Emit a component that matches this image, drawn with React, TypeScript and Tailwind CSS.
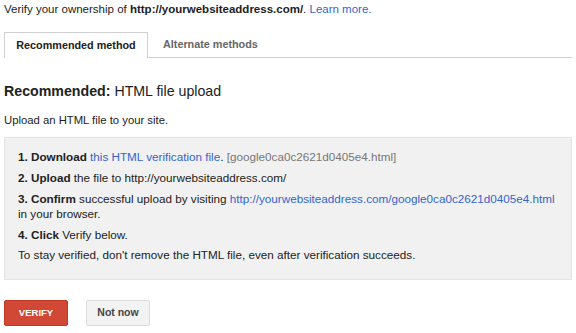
export default function App() {
  return (
    <div className="h-[333px] w-[576px] overflow-hidden bg-white font-['Liberation_Sans',Arial,sans-serif] text-[#222]">
      <p className="px-[4px] pt-[1px] text-[11.5px] leading-[16px]">
        Verify your ownership of <b>http://yourwebsiteaddress.com/</b>.{" "}
        <a className="text-[#3366cc]">Learn more.</a>
      </p>

      <div className="mx-[4px] mt-[15px] flex h-[26px] items-end border-b border-[#d0d0d0]">
        <div className="-mb-px flex h-[26px] w-[144px] items-center justify-center border border-b-0 border-[#d0d0d0] bg-white text-[10.8px] font-bold text-[#222]">
          Recommended method
        </div>
        <div className="flex h-[26px] items-center pl-[15px] text-[10.8px] font-bold text-[#666]">
          Alternate methods
        </div>
      </div>

      <h2 className="mt-[23px] px-[4px] text-[14.2px] leading-[20px]">
        <b>Recommended:</b> HTML file upload
      </h2>

      <p className="mt-[11px] px-[4px] text-[11.3px] leading-[16px]">Upload an HTML file to your site.</p>

      <div className="mx-[4px] mt-[9px] h-[143px] border border-[#e3e3e3] bg-[#f1f1f1] px-[13px] pt-[11px] text-[11.7px] leading-[15px]">
        <p>
          <b>1. Download</b> <a className="text-[#3366cc]">this HTML verification file</a>.{" "}
          <span className="text-[#777]">[google0ca0c2621d0405e4.html]</span>
        </p>
        <p className="mt-[6px]">
          <b>2. Upload</b> the file to http://yourwebsiteaddress.com/
        </p>
        <p className="mt-[6px]">
          <b>3. Confirm</b> successful upload by visiting{" "}
          <a className="text-[#3366cc]">http://yourwebsiteaddress.com/google0ca0c2621d0405e4.html</a>
          <br />
          in your browser.
        </p>
        <p className="mt-[6px]">
          <b>4. Click</b> Verify below.
        </p>
        <p className="mt-[5px]">To stay verified, don't remove the HTML file, even after verification succeeds.</p>
      </div>

      <div className="mt-[20px] flex gap-[18px] px-[4px]">
        <button className="h-[26px] w-[64px] rounded-[2px] border border-[#c53727] bg-[#d14836] text-[9.5px] font-bold text-white">
          VERIFY
        </button>
        <button className="h-[26px] w-[64px] rounded-[2px] border border-[#dcdcdc] bg-[#f3f3f3] text-[10.5px] font-bold text-[#444]">
          Not now
        </button>
      </div>
    </div>
  );
}
